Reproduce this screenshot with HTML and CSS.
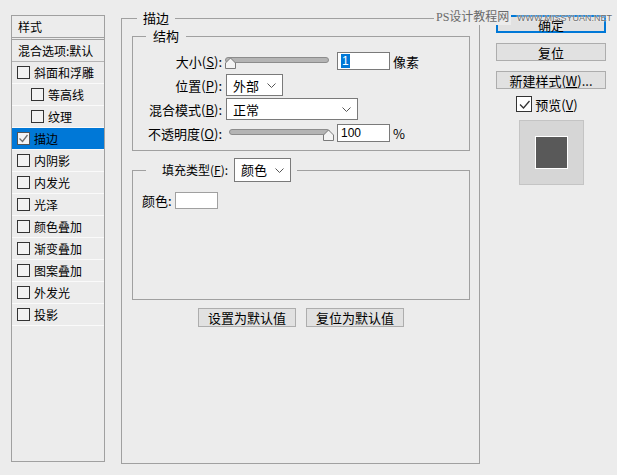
FILE: index.html
```html
<!DOCTYPE html>
<html lang="zh-CN">
<head>
    <meta charset="UTF-8">
    <meta name="viewport" content="width=device-width, initial-scale=1.0">
    <title>图层样式</title>
    <link rel="stylesheet" href="styles.css">
</head>
<body>
    <div class="dialog">
        <ul class="style-list">
            <li class="list-head">样式</li>
            <li class="list-blend">混合选项:默认</li>
            <li><span class="cb"></span>斜面和浮雕</li>
            <li class="sub"><span class="cb"></span>等高线</li>
            <li class="sub"><span class="cb"></span>纹理</li>
            <li class="active"><span class="cb checked"><svg width="11" height="11" viewBox="0 0 11 11"><path d="M1.5 5.5 L4.5 8.5 L9.5 2" fill="none" stroke="#6d6d6d" stroke-width="1.3"/></svg></span>描边</li>
            <li><span class="cb"></span>内阴影</li>
            <li><span class="cb"></span>内发光</li>
            <li><span class="cb"></span>光泽</li>
            <li><span class="cb"></span>颜色叠加</li>
            <li><span class="cb"></span>渐变叠加</li>
            <li><span class="cb"></span>图案叠加</li>
            <li><span class="cb"></span>外发光</li>
            <li><span class="cb"></span>投影</li>
        </ul>

        <fieldset class="group main-group">
            <legend>描边</legend>

            <fieldset class="group struct">
                <legend>结构</legend>
                <div class="row">
                    <label>大小(<u>S</u>):</label>
                    <svg class="slider" width="104" height="14" viewBox="0 0 104 14">
                        <rect x="0.5" y="2.5" width="103" height="5" rx="2.5" fill="#b4b4b4" stroke="#8c8c8c"/>
                        <path d="M0.5 13.5 V8 L5.5 3 L10.5 8 V13.5 Z" fill="#f4f4f4" stroke="#7a7a7a"/>
                    </svg>
                    <span class="field"><span class="sel-text">1</span></span>
                    <span class="unit">像素</span>
                </div>
                <div class="row">
                    <label>位置(<u>P</u>):</label>
                    <span class="select narrow">外部<svg class="chev" width="9" height="5" viewBox="0 0 9 5"><path d="M0.5 0.5 L4.5 4.5 L8.5 0.5" fill="none" stroke="#555"/></svg></span>
                </div>
                <div class="row">
                    <label>混合模式(<u>B</u>):</label>
                    <span class="select wide">正常<svg class="chev" width="9" height="5" viewBox="0 0 9 5"><path d="M0.5 0.5 L4.5 4.5 L8.5 0.5" fill="none" stroke="#555"/></svg></span>
                </div>
                <div class="row">
                    <label>不透明度(<u>O</u>):</label>
                    <svg class="slider opacity" width="106" height="14" viewBox="0 0 106 14">
                        <rect x="0.5" y="2.5" width="100" height="5" rx="2.5" fill="#b4b4b4" stroke="#8c8c8c"/>
                        <path d="M94.5 13.5 V8 L99.5 3 L104.5 8 V13.5 Z" fill="#f4f4f4" stroke="#7a7a7a"/>
                    </svg>
                    <span class="field opacity-field">100</span>
                    <span class="unit">%</span>
                </div>
            </fieldset>

            <fieldset class="group fill">
                <legend>
                    <span class="fill-label">填充类型(<u>F</u>):</span>
                    <span class="select narrow tall">颜色<svg class="chev" width="9" height="5" viewBox="0 0 9 5"><path d="M0.5 0.5 L4.5 4.5 L8.5 0.5" fill="none" stroke="#555"/></svg></span>
                </legend>
                <div class="color-row">颜色:<span class="swatch"></span></div>
            </fieldset>

            <div class="defaults">
                <button>设置为默认值</button>
                <button>复位为默认值</button>
            </div>
        </fieldset>

        <div class="side">
            <button class="primary">确定</button>
            <button>复位</button>
            <button>新建样式(<u>W</u>)...</button>
            <div class="preview-check">
                <span class="cb big"><svg width="13" height="13" viewBox="0 0 13 13"><path d="M2 6.5 L5.5 10 L11.5 3" fill="none" stroke="#333" stroke-width="1.3"/></svg></span>预览(<u>V</u>)
            </div>
            <div class="preview-box"><div class="preview-swatch"></div></div>
        </div>
    </div>

    <div class="watermark">PS设计教程网</div>
    <div class="watermark-url">WWW.MISSYUAN.NET</div>
</body>
</html>
```

FILE: styles.css
```css
body {
    margin: 0;
    background: #ececec;
    font-family: "Noto Sans CJK SC", "Liberation Sans", sans-serif;
    font-size: 12px;
    color: #000;
    width: 617px;
    height: 475px;
    overflow: hidden;
    position: relative;
}

u {
    text-decoration: underline;
    text-underline-offset: 1px;
}

.dialog {
    display: flex;
    align-items: flex-start;
    padding: 10px 0 0 11px;
}

/* left list */
.style-list {
    list-style: none;
    margin: 5px 0 0 0;
    padding: 0;
    width: 94px;
    height: 447px;
    box-sizing: border-box;
    border: 1px solid #a0a0a0;
}

.style-list li {
    display: flex;
    align-items: center;
    height: 21px;
    line-height: 21px;
    padding-left: 5px;
    border-bottom: 1px solid #fafafa;
    white-space: nowrap;
}

.style-list .list-head {
    padding-left: 6px;
    border-bottom: 1px solid #a0a0a0;
    margin-bottom: 1px;
}

.style-list .list-blend {
    padding-left: 6px;
    border-top: 1px solid #a0a0a0;
    border-bottom: 1px solid #b4b4b4;
}

.style-list .sub {
    padding-left: 19px;
}

.style-list .active {
    background: #0078d7;
}

.cb {
    display: inline-flex;
    align-items: center;
    justify-content: center;
    width: 11px;
    height: 11px;
    border: 1px solid #333;
    background: #f2f2f2;
    margin-right: 4px;
    flex: none;
}

.cb.checked {
    background: #f4f4f4;
    border-color: #555;
}

.cb.big {
    width: 14px;
    height: 14px;
    background: #fff;
    margin-right: 3px;
}

/* groups */
.group {
    margin: 0;
    border: 1px solid #a0a0a0;
    box-sizing: border-box;
    min-width: 0;
}

.group legend {
    line-height: 16px;
    height: 16px;
    font-size: 13px;
}

.main-group {
    width: 359px;
    height: 454px;
    margin-left: 16px;
    padding: 2px 9px 0 10px;
}

.main-group > legend {
    margin-left: 5px;
    padding: 0 6px;
}

.struct {
    padding: 6px 0 6px 0;
}

.struct > legend {
    margin-left: 13px;
    padding: 0 7px;
}

.row {
    display: flex;
    align-items: center;
    height: 22px;
    margin-bottom: 2px;
}

.row:last-child {
    margin-bottom: 0;
}

.row label {
    width: 89px;
    text-align: right;
    margin-right: 4px;
    font-size: 13px;
    white-space: nowrap;
}

.slider {
    display: block;
    margin-left: -1px;
    margin-top: 1px;
}

.slider.opacity {
    margin-left: 3px;
}

.field {
    display: inline-flex;
    align-items: center;
    box-sizing: border-box;
    width: 53px;
    height: 18px;
    background: #fff;
    border: 1px solid #7a7a7a;
    margin-left: 8px;
    padding-left: 3px;
    font-family: "Liberation Sans", sans-serif;
    font-size: 12px;
}

.opacity-field {
    margin-left: 2px;
}

.sel-text {
    background: #0078d7;
    color: #fff;
    padding: 0 1px;
    line-height: 14px;
}

.unit {
    margin-left: 3px;
    font-size: 13px;
}

.select {
    display: inline-flex;
    align-items: center;
    justify-content: space-between;
    box-sizing: border-box;
    height: 22px;
    background: #fff;
    border: 1px solid #7a7a7a;
    padding: 0 6px 0 6px;
    font-size: 13px;
}

.select.narrow {
    width: 57px;
}

.select.wide {
    width: 132px;
}

.select.tall {
    height: 24px;
}

.chev {
    display: block;
}

.fill {
    margin-top: 7px;
    height: 142px;
    padding: 9px 0 0 9px;
}

.fill > legend {
    display: flex;
    align-items: center;
    height: 24px;
    line-height: 24px;
    margin-left: 4px;
    padding: 0 6px 0 16px;
}

.fill-label {
    font-size: 12px;
    white-space: nowrap;
}

.fill > legend .select {
    margin-left: 6px;
}

.color-row {
    display: flex;
    align-items: center;
    height: 18px;
    font-size: 13px;
}

.swatch {
    width: 43px;
    height: 17px;
    box-sizing: border-box;
    background: #fff;
    border: 1px solid #a0a0a0;
    margin-left: 3px;
}

.defaults {
    display: flex;
    justify-content: center;
    gap: 10px;
    margin-top: 8px;
}

button {
    font-family: "Noto Sans CJK SC", "Liberation Sans", sans-serif;
    font-size: 13px;
    line-height: 15px;
    color: #000;
    background: #e1e1e1;
    border: 1px solid #adadad;
    padding: 0;
    border-radius: 0;
}

.defaults button {
    width: 98px;
    height: 19px;
}

/* right column */
.side {
    display: flex;
    flex-direction: column;
    align-items: center;
    width: 110px;
    margin: 5px 0 0 16px;
}

.side button {
    width: 110px;
    height: 18px;
    margin-bottom: 10px;
}

.side button.primary {
    border: 2px solid #0078d7;
}

.preview-check {
    display: flex;
    align-items: center;
    height: 16px;
    margin-top: -3px;
    margin-left: -8px;
    font-size: 13px;
}

.preview-box {
    display: flex;
    align-items: center;
    justify-content: center;
    width: 65px;
    height: 65px;
    margin-top: 8px;
    background: #d6d6d6;
    border: 1px solid #c4c4c4;
    box-sizing: border-box;
}

.preview-swatch {
    width: 33px;
    height: 33px;
    box-sizing: border-box;
    background: #595959;
    border: 1px solid #fff;
}

/* watermark over the dialog */
.watermark {
    position: absolute;
    left: 434px;
    top: 9px;
    padding: 0 2px;
    background: #ececec;
    color: #6a6a6a;
    font-family: "Liberation Serif", "Noto Sans CJK SC", serif;
    font-size: 12px;
    line-height: 16px;
}

.watermark-url {
    position: absolute;
    left: 517px;
    top: 13px;
    color: #6a6a6a;
    font-family: "Liberation Sans", sans-serif;
    font-size: 9px;
    line-height: 10px;
    text-shadow: 0 0 2px #fff, 0 0 1px #fff;
}
```
